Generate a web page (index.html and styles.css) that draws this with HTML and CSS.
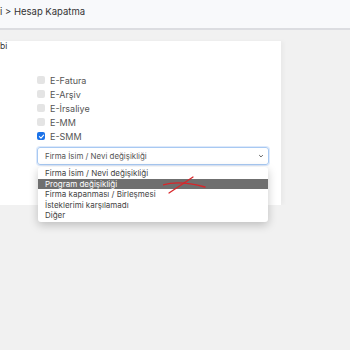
FILE: index.html
```html
<!DOCTYPE html>
<html lang="tr">
<head>
  <meta charset="UTF-8">
  <meta name="viewport" content="width=device-width, initial-scale=1.0">
  <title>Hesap Kapatma</title>
  <link rel="stylesheet" href="styles.css">
</head>
<body>
  <div class="topbar">i &gt; Hesap Kapatma</div>

  <div class="page">
    <div class="card">
      <div class="card-title">bi</div>

      <div class="checklist">
        <label class="check"><span class="box"></span>E-Fatura</label>
        <label class="check"><span class="box"></span>E-Arşiv</label>
        <label class="check"><span class="box"></span>E-İrsaliye</label>
        <label class="check"><span class="box"></span>E-MM</label>
        <label class="check"><span class="box checked">
          <svg viewBox="0 0 10 10" width="7" height="7"><path d="M2 5.2 L4.2 7.2 L8 3" fill="none" stroke="#fff" stroke-width="1.6" stroke-linecap="round" stroke-linejoin="round"/></svg>
        </span>E-SMM</label>
      </div>

      <div class="select-wrap">
        <div class="select">
          <span>Firma İsim / Nevi değişikliği</span>
          <svg class="chevron" viewBox="0 0 10 10" width="6" height="6"><path d="M2 3.5 L5 6.5 L8 3.5" fill="none" stroke="#555" stroke-width="1.6"/></svg>
        </div>
      </div>
    </div>
  </div>

  <div class="dropdown">
    <ul class="options">
      <li>Firma İsim / Nevi değişikliği</li>
      <li class="active">Program değişikliği</li>
      <li>Firma kapanması / Birleşmesi</li>
      <li>İsteklerimi karşılamadı</li>
      <li>Diğer</li>
    </ul>
    <svg class="scribble" viewBox="0 0 50 22" width="50" height="22">
      <path d="M6 21 L30 5" fill="none" stroke="#d8262a" stroke-width="1.3" stroke-linecap="round"/>
      <path d="M0 13 Q16 8 42 15" fill="none" stroke="#d8262a" stroke-width="1.3" stroke-linecap="round"/>
    </svg>
  </div>
</body>
</html>
```

FILE: styles.css
```css
body {
  margin: 0;
  background: #f1f1f1;
  font-family: Inter, "Noto Sans", sans-serif;
  color: #444;
}
.topbar {
  box-sizing: border-box;
  height: 30px;
  padding-bottom: 6px;
  background: #f8f9fb;
  border-bottom: 2px solid #dcdde1;
  display: flex;
  align-items: center;
  font-size: 9.5px;
  color: #333;
}
.page {
  padding-top: 11px;
}
.card {
  width: 281px;
  height: 164px;
  background: #fff;
  box-shadow: 3px 0 4px rgba(0, 0, 0, 0.03);
}
.card-title {
  font-size: 8.5px;
  line-height: 10px;
  color: #333;
}
.checklist {
  display: flex;
  flex-direction: column;
  padding-left: 37px;
  margin-top: 22px;
}
.check {
  display: flex;
  align-items: center;
  gap: 5px;
  height: 14px;
  font-size: 9px;
  color: #555;
}
.box {
  width: 8px;
  height: 8px;
  border-radius: 2px;
  background: #e4e4e4;
  display: flex;
  align-items: center;
  justify-content: center;
}
.box.checked {
  background: #1b72e8;
}
.select-wrap {
  margin: 4px 0 0 37px;
  width: 232px;
}
.select {
  height: 18px;
  box-sizing: border-box;
  border: 1px solid #a8c9f2;
  border-radius: 3px;
  box-shadow: 0 0 0 1px #dde9fb;
  display: flex;
  align-items: center;
  justify-content: space-between;
  padding: 0 4px 0 7px;
  font-size: 7.9px;
  color: #555;
}
/* open select menu, drawn over the page */
.dropdown {
  position: absolute;
  top: 167px;
  left: 38px;
  width: 230px;
  z-index: 5;
}
.options {
  margin: 0;
  padding: 1px 0;
  list-style: none;
  background: #fff;
  border-radius: 3px;
  box-shadow: 0 3px 10px rgba(0, 0, 0, 0.22);
}
.options li {
  height: 10.5px;
  line-height: 10.5px;
  font-size: 8px;
  padding-left: 7px;
  color: #444;
  white-space: nowrap;
}
.options li.active {
  background: #6f6f6f;
  color: #fff;
}
.scribble {
  position: absolute;
  top: 5px;
  left: 125px;
}
```
